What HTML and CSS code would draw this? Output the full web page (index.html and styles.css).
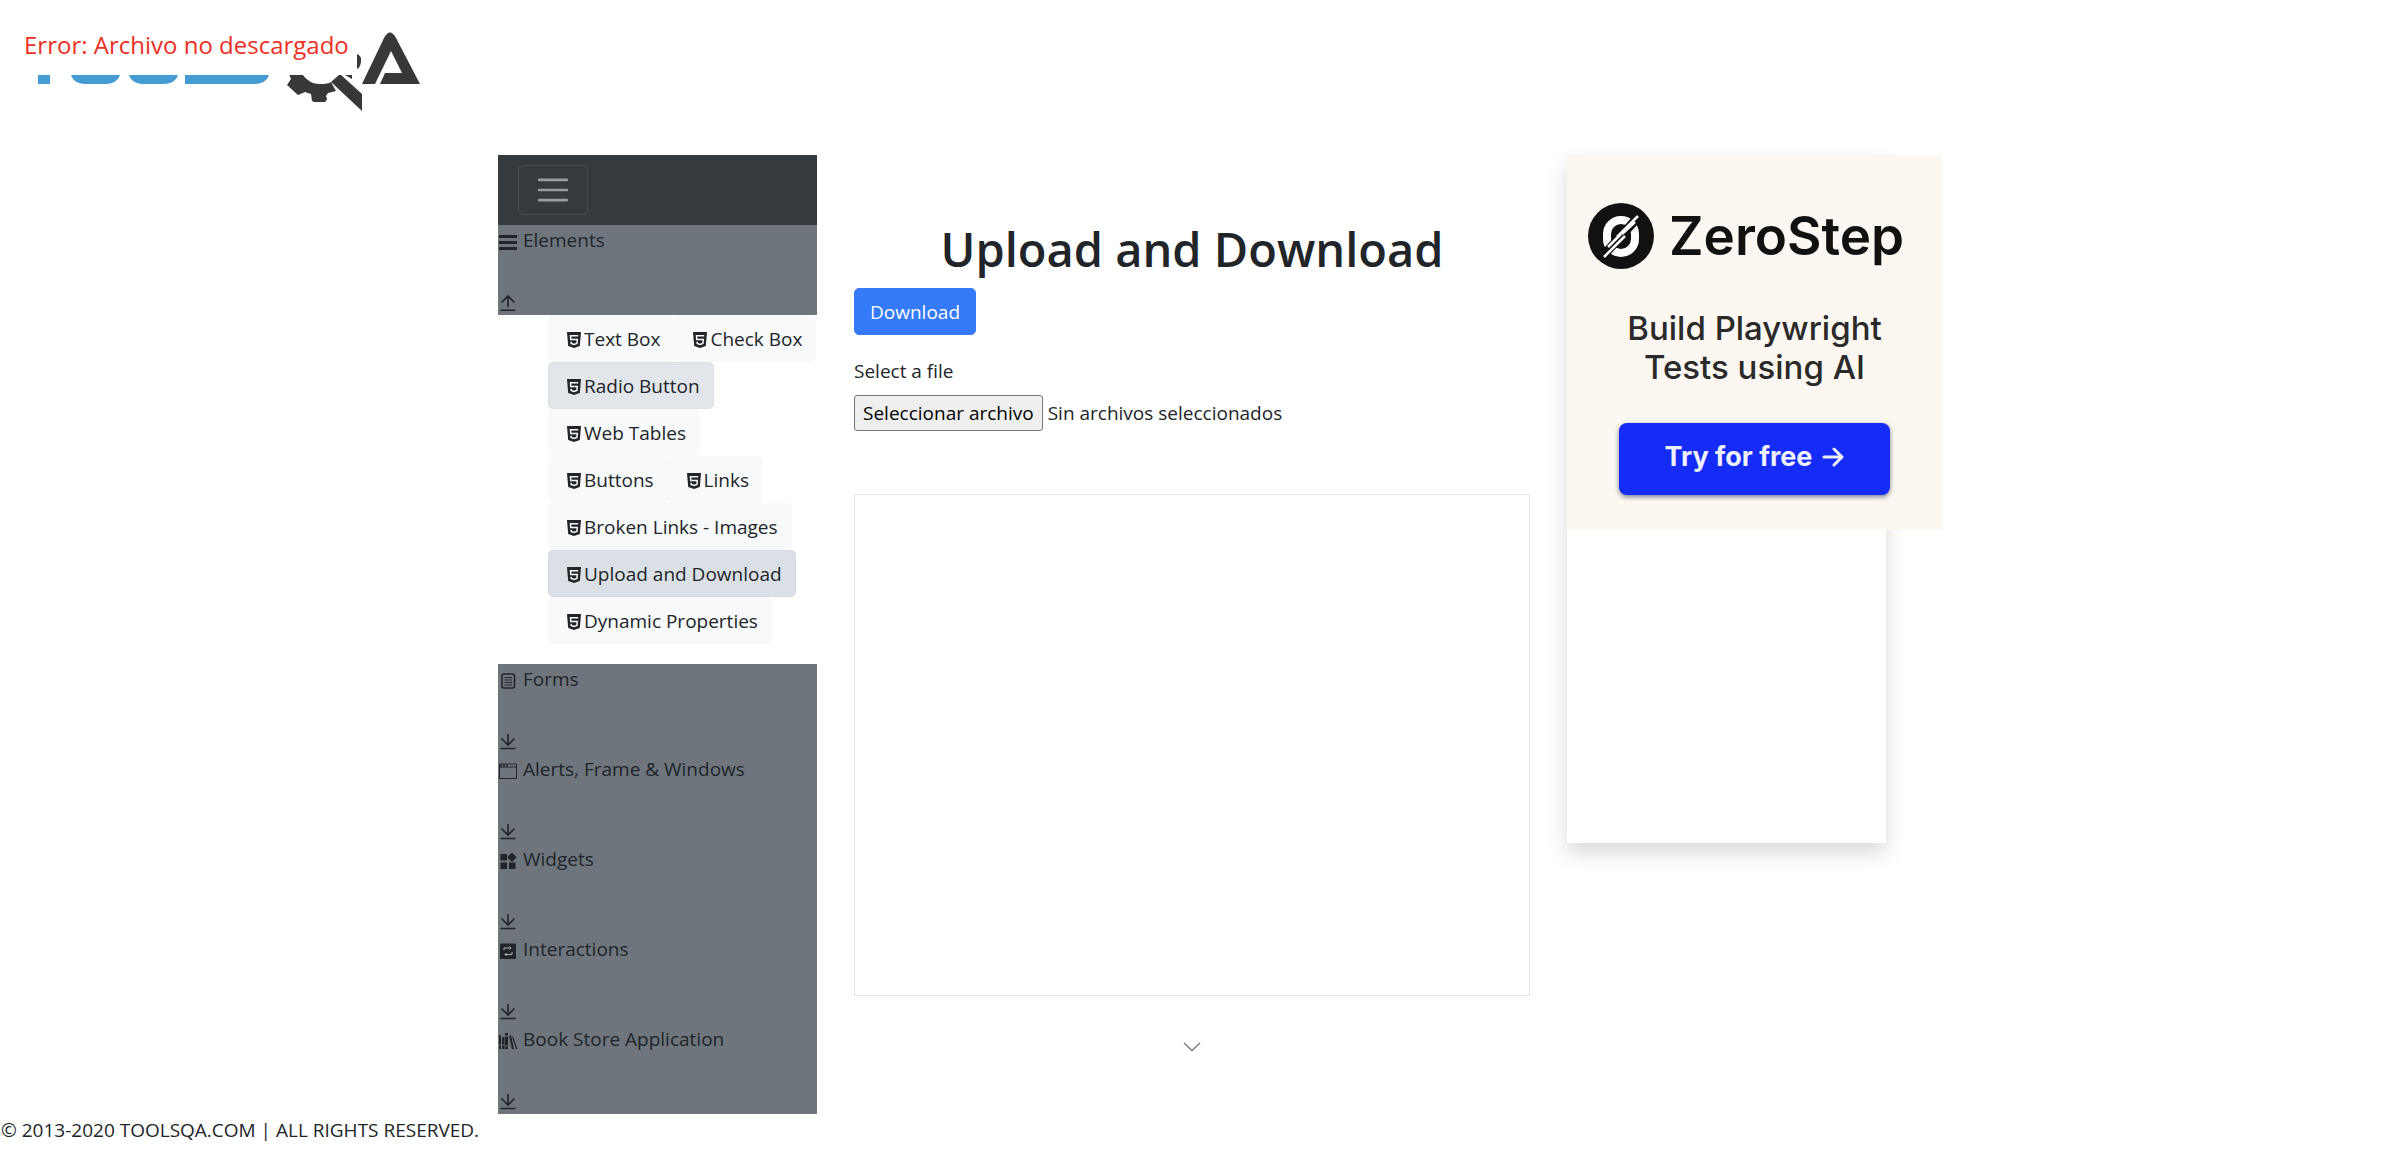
FILE: index.html
```html
<!DOCTYPE html>
<html lang="en">
<head>
<meta charset="utf-8">
<meta name="viewport" content="width=device-width, initial-scale=1">
<title>Upload and Download</title>
<link rel="stylesheet" href="styles.css">
</head>
<body>
<svg class="sprite" aria-hidden="true">
  <symbol id="html5" viewBox="0 0 20 20"><path fill="currentColor" d="M3 3h14l-1.200 14L10 19l-5.800-2z"/><path fill="none" stroke="#f8f9fa" stroke-width="1.500" d="M14.200 6.800H6.500l.3 3.600h6.500l-.4 4.100-2.900.9-2.800-.9-.1-1.700"/></symbol>
  <symbol id="up" viewBox="0 0 20 20"><path fill="none" stroke="currentColor" stroke-width="1.600" d="M10 14V3M3.500 9.500 10 3l6.500 6.500M2.500 17.200h15"/></symbol>
  <symbol id="down" viewBox="0 0 20 20"><path fill="none" stroke="currentColor" stroke-width="1.600" d="M10 2v11M3.500 6.500 10 13l6.500-6.500M2.500 16.500h15"/></symbol>
</svg>

<div class="notice" role="alert">Error: Archivo no descargado</div>

<header class="header">
  <a href="#" aria-label="Home">
    <svg class="logo" viewBox="0 0 430 125" aria-hidden="true">
      <g fill="#459cd4">
        <path d="M38 40h12v44H38zM70 40h51v28q0 16-16 16H86q-16 0-16-16zM128 40h51v28q0 16-16 16h-19q-16 0-16-16zM185 40h85v28q0 16-16 16h-69z"/>
      </g>
      <g fill="#383838">
        <path d="M289 74h13q7 10 18 10 8 0 11-2l5 9-8 2-2 3 1 3-1 2-1 1h-11l-2-1-1-7-6-2-7 3-11-10 4-6z"/>
        <path d="M331 82l9-8 22 20v17zM345 75h7v4zM357 54q5 2 4 8t-4 7z"/>
        <path d="M362 84l22-46q6-11 12 0l24 46h-40l5-11h17l-11-22-16 33z"/>
      </g>
    </svg>
  </a>
</header>

<div class="layout">
  <aside class="sidebar">
    <div class="navbar">
      <button class="toggler" type="button" aria-label="Toggle navigation">
        <svg viewBox="0 0 30 30" aria-hidden="true"><path stroke="currentColor" stroke-width="2" stroke-linecap="round" d="M4 7h22M4 15h22M4 23h22"/></svg>
      </button>
    </div>

    <section class="group">
      <div class="group-title"><svg class="icon" viewBox="0 0 20 20"><path fill="currentColor" d="M1 3h18v3H1zM1 9h18v3H1zM1 15h18v3H1z"/></svg>Elements</div>
      <svg class="icon"><use href="#up"/></svg>
    </section>
    <ul class="menu">
      <li><button class="item" type="button"><svg class="icon"><use href="#html5"/></svg>Text Box</button></li>
      <li><button class="item" type="button"><svg class="icon"><use href="#html5"/></svg>Check Box</button></li>
      <li><button class="item item-focus" type="button"><svg class="icon"><use href="#html5"/></svg>Radio Button</button></li>
      <li><button class="item" type="button"><svg class="icon"><use href="#html5"/></svg>Web Tables</button></li>
      <li><button class="item" type="button"><svg class="icon"><use href="#html5"/></svg>Buttons</button></li>
      <li><button class="item" type="button"><svg class="icon"><use href="#html5"/></svg>Links</button></li>
      <li><button class="item" type="button"><svg class="icon"><use href="#html5"/></svg>Broken Links - Images</button></li>
      <li><button class="item item-active" type="button"><svg class="icon"><use href="#html5"/></svg>Upload and Download</button></li>
      <li><button class="item" type="button"><svg class="icon"><use href="#html5"/></svg>Dynamic Properties</button></li>
    </ul>

    <section class="group">
      <div class="group-title"><svg class="icon" viewBox="0 0 20 20"><rect x="4" y="3" width="12.500" height="14" rx="2" fill="none" stroke="currentColor" stroke-width="1.600"/><path stroke="currentColor" d="M6.500 6.500h7.500M6.500 9h7.500M6.500 11.500h7.500M6.500 14h7.500"/></svg>Forms</div>
      <svg class="icon"><use href="#down"/></svg>
    </section>
    <section class="group">
      <div class="group-title"><svg class="icon" viewBox="0 0 20 20"><path fill="none" stroke="currentColor" d="M1.500 3h17v14.500h-17zM1.500 6h17"/><path stroke="currentColor" stroke-width="1.500" stroke-dasharray="2 1" d="M2 4.500h9"/></svg>Alerts, Frame &amp; Windows</div>
      <svg class="icon"><use href="#down"/></svg>
    </section>
    <section class="group">
      <div class="group-title"><svg class="icon" viewBox="0 0 20 20"><path fill="currentColor" d="M2.500 3h6.500v6.500H2.500zM2.500 11.500h6.500V18H2.500zM11 11.500h6.500V18H11zM14 1.500l4.700 4.700L14 10.900 9.300 6.200z"/></svg>Widgets</div>
      <svg class="icon"><use href="#down"/></svg>
    </section>
    <section class="group">
      <div class="group-title"><svg class="icon" viewBox="0 0 20 20"><rect x="2" y="2.500" width="16" height="15.500" rx="1" fill="currentColor"/><path fill="none" stroke="#adb2b7" d="M6 9V7h7M11.500 5.500 13 7l-1.500 1.500M14 11v2.500H7M8.500 12 7 13.500 8.500 15"/></svg>Interactions</div>
      <svg class="icon"><use href="#down"/></svg>
    </section>
    <section class="group">
      <div class="group-title"><svg class="icon" viewBox="0 0 20 20"><path fill="currentColor" d="M1 4h2v14H1zM4 6h2.500v12H4zM7 2h3v16H7zM11 5l2-1 3 14h-2zM14 6l1-.5L19.500 18H18z"/><path stroke="#6c757d" d="M1 14h5M7 5h3M7 15h3"/></svg>Book Store Application</div>
      <svg class="icon"><use href="#down"/></svg>
    </section>
  </aside>

  <main class="content">
    <h1>Upload and Download</h1>
    <button class="download" type="button">Download</button>
    <form class="upload">
      <label for="file">Select a file</label>
      <div class="picker">
        <input id="file" type="file">
        <span class="picker-button">Seleccionar archivo</span>
        <span>Sin archivos seleccionados</span>
      </div>
    </form>
    <div class="frame"></div>
    <svg class="chevron" viewBox="0 0 18 10" aria-hidden="true"><path fill="none" stroke="#777" stroke-width="1.300" d="M1 1l8 7.500L17 1"/></svg>
  </main>

  <aside class="card">
    <a class="ad" href="#">
      <span class="brand">
        <svg viewBox="0 0 66 66" aria-hidden="true">
          <circle cx="33" cy="33" r="33" fill="#111"/>
          <rect x="19" y="17" width="28" height="33" rx="14" fill="none" stroke="#fff" stroke-width="8"/>
          <path stroke="#111" stroke-width="9" d="M14 54 52 12"/>
          <path stroke="#fff" stroke-width="2.500" d="M16 54 37 33M29 34 50 13M20 44l13-13M34 31l13-12"/>
        </svg>
        ZeroStep
      </span>
      <span class="tagline">Build Playwright<br>Tests using AI</span>
      <span class="cta">Try for free
        <svg viewBox="0 0 22 20" aria-hidden="true"><path fill="none" stroke="currentColor" stroke-width="3" stroke-linecap="round" stroke-linejoin="round" d="M2 10h18M12 2l8 8-8 8"/></svg>
      </span>
    </a>
  </aside>
</div>

<footer class="footer">© 2013-2020 TOOLSQA.COM | ALL RIGHTS RESERVED.</footer>
</body>
</html>
```

FILE: styles.css
```css
* { box-sizing: border-box; }

body {
  margin: 0;
  background: #fff;
  color: #212529;
  font: 19px/30px "Segoe UI", "Open Sans", "Noto Sans", sans-serif;
}

button { font: inherit; color: inherit; }
.sprite { display: none; }

.notice {
  position: absolute;
  top: 0;
  left: 0;
  z-index: 1;
  padding: 30px 8px 15px 24px;
  background: #fff;
  color: #ee2f24;
  font-size: 24px;
  white-space: nowrap;
}

.header { height: 155px; }
.header a { display: inline-block; }
.logo { display: block; width: 430px; height: 125px; }

.layout {
  display: grid;
  grid-template-columns: 319px minmax(0, 1fr) 319px;
  gap: 37px;
  align-items: start;
  max-width: 1388px;
  margin: 0 auto;
}

.icon { display: block; flex: none; width: 20px; height: 20px; }

/* Sidebar */
.navbar { padding: 10px 20px; background: #353a3e; }
.toggler {
  display: block;
  padding: 5px 15px;
  border: 1px solid #494e51;
  border-radius: 5px;
  background: none;
  color: #9a9d9f;
}
.toggler svg { display: block; width: 38px; height: 38px; }

.group {
  display: flex;
  flex-direction: column;
  justify-content: space-between;
  height: 90px;
  padding-bottom: 2px;
  background: #6e757c;
}
.group-title { display: flex; align-items: center; gap: 5px; }
.group-title .icon { margin-top: 4px; }

.menu {
  display: flex;
  flex-wrap: wrap;
  margin: 0 0 20px;
  padding: 0 0 0 50px;
  list-style: none;
}
.item {
  display: flex;
  align-items: center;
  height: 47px;
  padding: 0 13px 0 15px;
  border: 1px solid #f8f9fa;
  border-radius: 5px;
  background: #f8f9fa;
  white-space: nowrap;
}
.item-focus { border-color: #dae0e5; background: #e2e6ea; }
.item-active { border-color: #d3d9df; background: #dae0e5; }

/* Main column */
.content { display: flex; flex-direction: column; align-items: flex-start; }
h1 {
  align-self: stretch;
  margin: 63px 0 7px;
  font-size: 47px;
  line-height: 63px;
  font-weight: 600;
  text-align: center;
}
.download {
  height: 47px;
  padding: 0 15px;
  border: 1px solid #347af9;
  border-radius: 5px;
  background: #347af9;
  color: #fff;
}
.upload { margin-top: 21px; }
.upload label { display: block; margin-bottom: 9px; }
.picker { position: relative; display: flex; align-items: center; gap: 5px; }
.picker input { position: absolute; inset: 0; width: 100%; opacity: 0; }
.picker-button {
  padding: 2px 8px;
  border: 1px solid #767676;
  border-radius: 3px;
  background: #efefef;
  color: #000;
}
.frame {
  align-self: stretch;
  height: 502px;
  margin-top: 63px;
  border: 1px solid #e3e3e3;
}
.chevron { align-self: center; width: 18px; height: 10px; margin-top: 46px; }

/* Advertisement */
.card { height: 688px; box-shadow: 0 10px 20px rgba(0, 0, 0, .15); }
.ad {
  display: flex;
  flex-direction: column;
  align-items: center;
  width: 375px;
  height: 375px;
  padding-top: 48px;
  background: #fcf8f1;
  color: #111;
  font-family: Inter, sans-serif;
  text-decoration: none;
}
.brand {
  display: flex;
  align-items: center;
  align-self: flex-start;
  gap: 15px;
  height: 66px;
  padding-left: 21px;
  font-size: 53px;
  font-weight: 600;
}
.brand svg { width: 66px; height: 66px; }
.tagline {
  margin-top: 40px;
  color: #2b2a2a;
  font-size: 33px;
  line-height: 39px;
  font-weight: 500;
  text-align: center;
}
.cta {
  display: flex;
  align-items: center;
  justify-content: center;
  gap: 10px;
  width: 271px;
  height: 72px;
  margin-top: 36px;
  padding-bottom: 4px;
  border-radius: 8px;
  background: #142cf5;
  box-shadow: 0 2px 5px rgba(0, 0, 60, .5);
  color: #eef0ff;
  font-size: 27px;
  font-weight: 700;
}
.cta svg { width: 22px; height: 20px; }

.footer { padding: 1px; }
```
